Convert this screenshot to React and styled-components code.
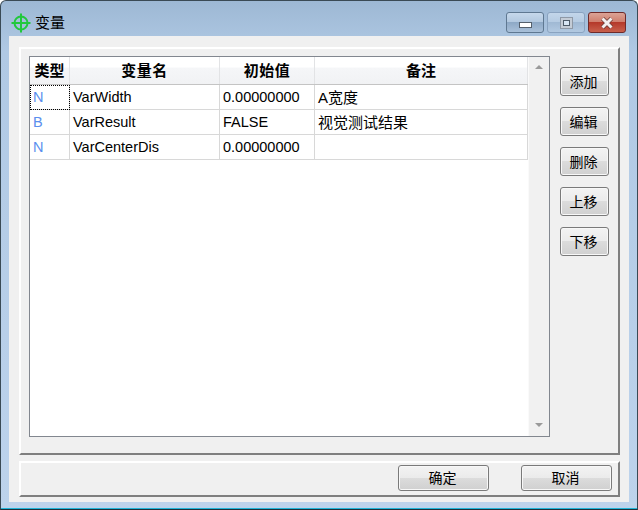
import React from 'react'
import styled, { createGlobalStyle } from 'styled-components'

const GlobalStyle = createGlobalStyle`
    html, body { margin: 0; padding: 0; background: #fff; }
    body { font-family: "Liberation Sans", "Noto Sans CJK SC", sans-serif; }
`

const columns = '40px 150px 95px 213px'

const Window = styled.div`
    box-sizing: border-box;
    width: 638px;
    height: 510px;
    display: flex;
    flex-direction: column;
    padding: 1px 2px 1px;
    border: 1px solid #3a4a55;
    border-bottom: 1px solid #20303a;
    border-radius: 6px 6px 0 0;
    box-shadow: inset 0 -1px 0 #1fb4d8;
    background: linear-gradient(180deg, #9db8d4 0%, #b0c9e4 10%, #bdd3ec 100%);
`
const TitleBar = styled.div`
    height: 34px;
    flex: none;
    display: flex;
    align-items: flex-start;
    padding-left: 8px;
`
const TitleText = styled.span`
    font-size: 15px;
    line-height: 15px;
    margin: 13px 0 0 4px;
    color: #000;
`
const TitleIcon = styled.svg`
    width: 20px;
    height: 20px;
    margin-top: 11px;
`
const Controls = styled.div`
    margin-left: auto;
    display: flex;
    gap: 3px;
    margin-top: 10px;
    margin-right: 9px;
`
const Control = styled.div`
    box-sizing: border-box;
    height: 21px;
    width: ${p => p.$w}px;
    display: flex;
    align-items: center;
    justify-content: center;
    border: 1px solid ${p => p.$close ? '#6e2a2a' : p.$faded ? '#8aa3c0' : '#5f7891'};
    border-radius: 3px;
    background: ${p => p.$close
        ? 'linear-gradient(180deg, #dba396 0%, #cf7d6c 48%, #b5392a 50%, #c8604c 100%)'
        : p.$faded
            ? 'linear-gradient(180deg, #c3d6ea 0%, #b5cbe2 48%, #a0b9d4 50%, #b2c9e1 100%)'
            : 'linear-gradient(180deg, #c6d8eb 0%, #b2c8df 48%, #8ea9c6 50%, #a9c0d9 100%)'};
`
const MinGlyph = styled.span`
    width: 13px;
    height: 6px;
    margin-top: 5px;
    box-sizing: border-box;
    background: #fff;
    border: 1px solid #55606c;
`
const MaxGlyph = styled.span`
    width: 13px;
    height: 12px;
    box-sizing: border-box;
    background: #c4ccd6;
    border: 1px solid #8f99a6;
    display: flex;
    align-items: center;
    justify-content: center;
`
const MaxInner = styled.span`
    width: 7px;
    height: 6px;
    box-sizing: border-box;
    background: #d8e6f4;
    border: 1px solid #4d5a68;
`
const Body = styled.div`
    flex: 1;
    display: flex;
    flex-direction: column;
    gap: 6px;
    background: #f0f0f0;
    margin: 0 6px 6px;
    padding: 11px 9px 4px 10px;
`
const Panel = styled.div`
    box-sizing: border-box;
    border-top: 2px solid #fff;
    border-left: 2px solid #fff;
    border-right: 2px solid #7f7f7f;
    border-bottom: 2px solid #7f7f7f;
    background: #f0f0f0;
    width: 601px;
`
const MainPanel = styled(Panel)`
    height: 408px;
    display: flex;
    padding: 7px 0 0 8px;
    gap: 10px;
`
const Footer = styled(Panel)`
    height: 36px;
    display: flex;
    justify-content: flex-end;
    gap: 32px;
    padding: 2px 6px 0 0;
`
const Grid = styled.div`
    box-sizing: border-box;
    width: 521px;
    height: 381px;
    background: #fff;
    border: 1px solid #82878f;
    display: flex;
`
const GridBody = styled.div`
    width: 498px;
    flex: none;
`
const HeaderRow = styled.div`
    display: grid;
    grid-template-columns: ${columns};
    height: 27px;
    border-bottom: 1px solid #c4c4c4;
    background: linear-gradient(180deg, #fff 0%, #fff 38%, #f5f6f8 40%, #f1f2f4 100%);
`
const HeaderCell = styled.div`
    box-sizing: border-box;
    border-right: 1px solid #e2e3e5;
    display: flex;
    align-items: center;
    justify-content: center;
    padding-bottom: 3px;
    font-size: 15px;
    font-weight: 700;
    color: #000;
    letter-spacing: ${p => p.$spread ? '0.5px' : '0'};
`
const Row = styled.div`
    display: grid;
    grid-template-columns: ${columns};
    height: 24px;
    border-bottom: 1px solid #d8d8d8;
`
const Cell = styled.div`
    box-sizing: border-box;
    border-right: 1px solid #d8d8d8;
    padding-left: 3px;
    font-size: ${p => p.$note ? '15px' : '14.5px'};
    line-height: 25px;
    color: ${p => p.$type ? '#5b8fee' : '#000'};
    white-space: nowrap;
    outline: ${p => p.$focus ? '1px dotted #000' : 'none'};
    outline-offset: -1px;
`
const Scroll = styled.div`
    flex: 1;
    display: flex;
    flex-direction: column;
    justify-content: space-between;
    align-items: center;
    padding: 8px 0 9px;
    background: #f1f1f1;
    border-left: 1px solid #fafafa;
`
const Arrow = styled.span`
    width: 0;
    height: 0;
    border-left: 4px solid transparent;
    border-right: 4px solid transparent;
    ${p => p.$up ? 'border-bottom: 4px solid #9a9a9a;' : 'border-top: 4px solid #9a9a9a;'}
`
const SideButtons = styled.div`
    display: flex;
    flex-direction: column;
    gap: 11px;
    margin-top: 11px;
`
const Button = styled.button`
    box-sizing: border-box;
    width: ${p => p.$wide ? '91px' : '49px'};
    height: ${p => p.$wide ? '26px' : '29px'};
    padding: 0 2px 2px 0;
    border: 1px solid #7a7a7a;
    border-radius: 3px;
    background: linear-gradient(180deg, #f3f3f3 0%, #ebebeb 48%, #dcdcdc 50%, #d0d0d0 100%);
    box-shadow: inset 0 0 0 1px #f8f8f8;
    font-family: "Liberation Sans", "Noto Sans CJK SC", sans-serif;
    font-size: 14px;
    color: #000;
`

const rows = [
    { type: 'N', name: 'VarWidth', value: '0.00000000', note: 'A宽度', focus: true },
    { type: 'B', name: 'VarResult', value: 'FALSE', note: '视觉测试结果' },
    { type: 'N', name: 'VarCenterDis', value: '0.00000000', note: '' },
]

const App = () => {
    return (
        <>
            <GlobalStyle />
            <Window>
                <TitleBar>
                    <TitleIcon viewBox="0 0 20 20">
                        <circle cx="10" cy="10" r="6.5" fill="none" stroke="#22c83c" strokeWidth="2" />
                        <path d="M10 0.5V19.5M0.5 10H19.5" stroke="#22c83c" strokeWidth="2" />
                    </TitleIcon>
                    <TitleText>变量</TitleText>
                    <Controls>
                        <Control $w={38}><MinGlyph /></Control>
                        <Control $w={38} $faded><MaxGlyph><MaxInner /></MaxGlyph></Control>
                        <Control $w={38} $close>
                            <svg width="14" height="12" viewBox="0 0 14 12">
                                <path d="M2.5 1.5L11.5 10.5M11.5 1.5L2.5 10.5" stroke="#6b3a35" strokeWidth="4.4" />
                                <path d="M2.5 1.5L11.5 10.5M11.5 1.5L2.5 10.5" stroke="#f4efee" strokeWidth="3" />
                            </svg>
                        </Control>
                    </Controls>
                </TitleBar>
                <Body>
                    <MainPanel>
                        <Grid>
                            <GridBody>
                                <HeaderRow>
                                    <HeaderCell>类型</HeaderCell>
                                    <HeaderCell $spread>变量名</HeaderCell>
                                    <HeaderCell $spread>初始值</HeaderCell>
                                    <HeaderCell>备注</HeaderCell>
                                </HeaderRow>
                                {rows.map(row => (
                                    <Row key={row.name}>
                                        <Cell $type $focus={row.focus}>{row.type}</Cell>
                                        <Cell>{row.name}</Cell>
                                        <Cell>{row.value}</Cell>
                                        <Cell $note>{row.note}</Cell>
                                    </Row>
                                ))}
                            </GridBody>
                            <Scroll>
                                <Arrow $up />
                                <Arrow />
                            </Scroll>
                        </Grid>
                        <SideButtons>
                            <Button>添加</Button>
                            <Button>编辑</Button>
                            <Button>删除</Button>
                            <Button>上移</Button>
                            <Button>下移</Button>
                        </SideButtons>
                    </MainPanel>
                    <Footer>
                        <Button $wide>确定</Button>
                        <Button $wide>取消</Button>
                    </Footer>
                </Body>
            </Window>
        </>
    )
}

export default App
